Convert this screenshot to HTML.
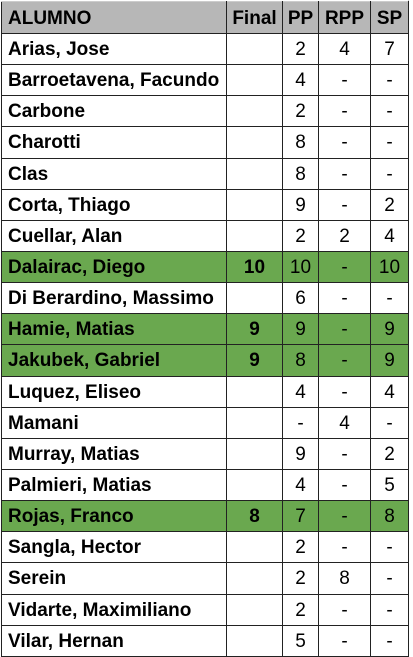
<!DOCTYPE html>
<html><head><meta charset="utf-8"><style>
body{margin:0;background:#fff;width:413px;height:657px;overflow:hidden;position:relative;font-family:"Liberation Sans",Arial,sans-serif;}
.grid{position:absolute;left:408px;top:0;width:5px;height:657px;border-left:1px solid #d0d0d0;background:#fff}
table{position:absolute;left:1px;top:1px;border-collapse:collapse;table-layout:fixed}
td{border:1px solid #222;height:28.15px;padding:2px 0 0 0;box-sizing:content-box;font-size:19px;color:#000;text-align:center;line-height:20px;white-space:nowrap;overflow:hidden}
td:first-child{text-align:left;padding-left:6px;font-weight:bold}
tr.h td{background:#b7b7b7;font-weight:bold;border-top:1px solid #ccc;height:29px}
tr.g td{background:#6aa84f}
td.b{font-weight:bold}
</style></head><body>
<div class="grid"></div>
<table>
<colgroup><col style="width:225px"><col style="width:56px"><col style="width:36px"><col style="width:52px"><col style="width:38px"></colgroup>
<tr class="h"><td>ALUMNO</td><td>Final</td><td>PP</td><td>RPP</td><td>SP</td></tr>
<tr><td>Arias, Jose</td><td></td><td>2</td><td>4</td><td>7</td></tr>
<tr><td>Barroetavena, Facundo</td><td></td><td>4</td><td>-</td><td>-</td></tr>
<tr><td>Carbone</td><td></td><td>2</td><td>-</td><td>-</td></tr>
<tr><td>Charotti</td><td></td><td>8</td><td>-</td><td>-</td></tr>
<tr><td>Clas</td><td></td><td>8</td><td>-</td><td>-</td></tr>
<tr><td>Corta, Thiago</td><td></td><td>9</td><td>-</td><td>2</td></tr>
<tr><td>Cuellar, Alan</td><td></td><td>2</td><td>2</td><td>4</td></tr>
<tr class="g"><td>Dalairac, Diego</td><td class="b">10</td><td>10</td><td>-</td><td>10</td></tr>
<tr><td>Di Berardino, Massimo</td><td></td><td>6</td><td>-</td><td>-</td></tr>
<tr class="g"><td>Hamie, Matias</td><td class="b">9</td><td>9</td><td>-</td><td>9</td></tr>
<tr class="g"><td>Jakubek, Gabriel</td><td class="b">9</td><td>8</td><td>-</td><td>9</td></tr>
<tr><td>Luquez, Eliseo</td><td></td><td>4</td><td>-</td><td>4</td></tr>
<tr><td>Mamani</td><td></td><td>-</td><td>4</td><td>-</td></tr>
<tr><td>Murray, Matias</td><td></td><td>9</td><td>-</td><td>2</td></tr>
<tr><td>Palmieri, Matias</td><td></td><td>4</td><td>-</td><td>5</td></tr>
<tr class="g"><td>Rojas, Franco</td><td class="b">8</td><td>7</td><td>-</td><td>8</td></tr>
<tr><td>Sangla, Hector</td><td></td><td>2</td><td>-</td><td>-</td></tr>
<tr><td>Serein</td><td></td><td>2</td><td>8</td><td>-</td></tr>
<tr><td>Vidarte, Maximiliano</td><td></td><td>2</td><td>-</td><td>-</td></tr>
<tr><td>Vilar, Hernan</td><td></td><td>5</td><td>-</td><td>-</td></tr>
</table>
</body></html>
